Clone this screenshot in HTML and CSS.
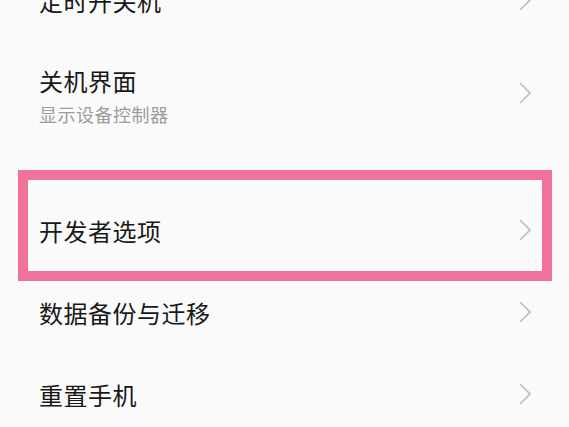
FILE: index.html
```html
<!DOCTYPE html>
<html lang="zh-CN">
<head>
<meta charset="utf-8">
<title>设置</title>
<link rel="stylesheet" href="styles.css">
</head>
<body>
<div class="list">
  <div class="row">
    <div class="text"><div class="title">定时开关机</div></div>
    <svg class="chev" viewBox="0 0 12 22"><path d="M1 1 L11 11 L1 21"/></svg>
  </div>
  <div class="row tall">
    <div class="text">
      <div class="title">关机界面</div>
      <div class="sub">显示设备控制器</div>
    </div>
    <svg class="chev" viewBox="0 0 12 22"><path d="M1 1 L11 11 L1 21"/></svg>
  </div>
  <div class="row section highlight">
    <div class="text"><div class="title">开发者选项</div></div>
    <svg class="chev" viewBox="0 0 12 22"><path d="M1 1 L11 11 L1 21"/></svg>
  </div>
  <div class="row">
    <div class="text"><div class="title">数据备份与迁移</div></div>
    <svg class="chev" viewBox="0 0 12 22"><path d="M1 1 L11 11 L1 21"/></svg>
  </div>
  <div class="row">
    <div class="text"><div class="title">重置手机</div></div>
    <svg class="chev" viewBox="0 0 12 22"><path d="M1 1 L11 11 L1 21"/></svg>
  </div>
</div>
</body>
</html>
```
FILE: styles.css
```css
html, body {
  margin: 0;
  padding: 0;
  background: #fafafa;
  overflow: hidden;
  width: 569px;
  height: 427px;
}
body {
  font-family: "Noto Sans CJK SC", "Noto Sans", sans-serif;
}
.list {
  margin-top: -40px;
  display: flex;
  flex-direction: column;
}
.row {
  position: relative;
  height: 82px;
  display: flex;
  align-items: center;
  justify-content: space-between;
  padding: 0 38px 0 39px;
  box-sizing: border-box;
}
.row.tall {
  height: 108px;
}
.row.section {
  margin-top: 40px;
}
.text {
  display: flex;
  flex-direction: column;
}
.title {
  font-size: 24px;
  line-height: 28px;
  color: #181818;
  letter-spacing: 0.5px;
}
.sub {
  font-size: 18px;
  line-height: 22px;
  margin-top: 8px;
  color: #9c9c9c;
  letter-spacing: 0.5px;
}
.chev {
  width: 12px;
  height: 22px;
  fill: none;
  stroke: #bdbdbd;
  stroke-width: 1.6;
  margin-top: -2px;
}
.row.tall .chev {
  margin-top: -6px;
}
.highlight::after {
  content: "";
  position: absolute;
  left: 18px;
  top: -20px;
  width: 534px;
  height: 111px;
  border: 10px solid #f2739a;
  box-sizing: border-box;
  pointer-events: none;
}
```
